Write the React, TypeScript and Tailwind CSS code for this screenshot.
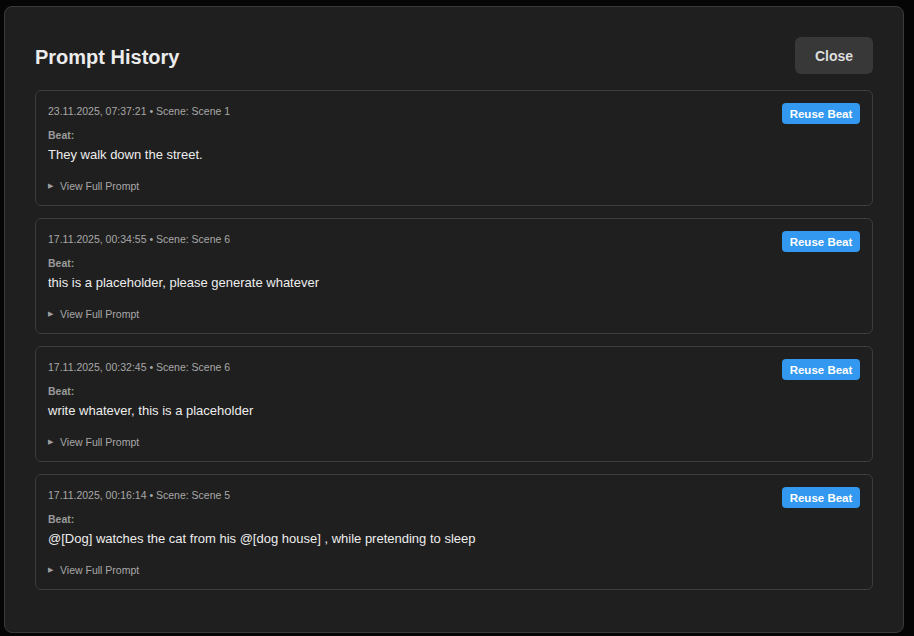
import React from "react";

const items = [
  { ts: "23.11.2025, 07:37:21", scene: "Scene 1", beat: "They walk down the street." },
  { ts: "17.11.2025, 00:34:55", scene: "Scene 6", beat: "this is a placeholder, please generate whatever" },
  { ts: "17.11.2025, 00:32:45", scene: "Scene 6", beat: "write whatever, this is a placeholder" },
  { ts: "17.11.2025, 00:16:14", scene: "Scene 5", beat: "@[Dog] watches the cat from his @[dog house] , while pretending to sleep" },
];

export default function App() {
  return (
    <div
      className="w-[914px] h-[636px] bg-[#050505] pt-[6px] pl-[4px]"
      style={{ fontFamily: '"Segoe UI", "Liberation Sans", Arial, sans-serif' }}
    >
      <div className="w-[900px] h-[627px] bg-[#1f1f1f] border border-[#3a3a3a] rounded-[8px] px-[30px] pt-[30px]">
        <div className="flex items-start justify-between">
          <h2 className="text-[20px] leading-[28px] font-bold text-[#ececec] mt-[6px]">Prompt History</h2>
          <button className="w-[78px] h-[37px] pt-[2px] rounded-[6px] bg-[#383838] text-[#dddddd] text-[14px] font-bold">
            Close
          </button>
        </div>
        <div className="mt-[16px] flex flex-col gap-[12px]">
          {items.map((it, i) => (
            <div key={i} className="border border-[#3d3d3d] rounded-[6px] bg-[#1f1f1f] px-[12px] pt-[12px] pb-[10px] h-[116px]">
              <div className="flex items-start justify-between">
                <div className="text-[10.5px] leading-[16px] text-[#a8a8a8]">
                  {it.ts} • Scene: {it.scene}
                </div>
                <button className="h-[21px] w-[78px] pt-[1px] rounded-[4px] bg-[#3399f0] text-white text-[11.5px] font-bold leading-[20px]">
                  Reuse Beat
                </button>
              </div>
              <div className="mt-[3px] text-[10.5px] leading-[16px] font-bold text-[#9a9a9a]">Beat:</div>
              <div className="mt-[2px] text-[13px] leading-[20px] text-[#ededed]">{it.beat}</div>
              <div className="mt-[13px] flex items-center gap-[7px] text-[10.5px] leading-[16px] text-[#a8a8a8]">
                <span className="text-[7px] text-[#a0a0a0]">▶</span>
                <span>View Full Prompt</span>
              </div>
            </div>
          ))}
        </div>
      </div>
    </div>
  );
}
